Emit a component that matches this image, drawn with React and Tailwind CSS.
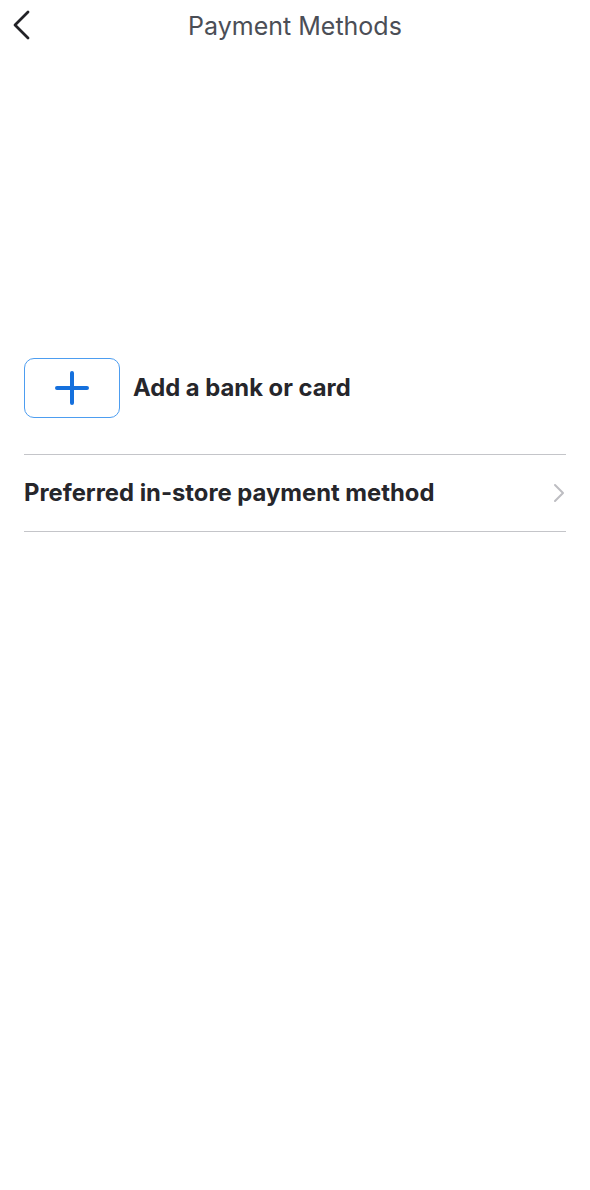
import React from 'react';

const ChevronLeft = () => (
  <svg width="20" height="30" viewBox="0 0 20 30" fill="none">
    <path d="M16 2 L3 15 L16 28" stroke="#222226" strokeWidth="2.8" strokeLinecap="round" strokeLinejoin="round" />
  </svg>
);

const ChevronRight = () => (
  <svg width="14" height="20" viewBox="0 0 14 20" fill="none">
    <path d="M3 2 L11 10 L3 18" stroke="#bdbdc2" strokeWidth="2" strokeLinecap="round" strokeLinejoin="round" />
  </svg>
);

const Plus = () => (
  <svg width="34" height="34" viewBox="0 0 34 34" fill="none">
    <path d="M17 2 V32 M2 17 H32" stroke="#1570dd" strokeWidth="4" strokeLinecap="round" />
  </svg>
);

const App = () => {
  return (
    <div className="w-full min-h-[1190px] bg-white" style={{ fontFamily: 'Inter, "Noto Sans", sans-serif' }}>
      <div className="relative flex h-[53px] items-center justify-center">
        <button className="absolute left-[12px] top-[10px]">
          <ChevronLeft />
        </button>
        <h1 className="text-[25px] font-normal text-[#4b4e56]">Payment Methods</h1>
      </div>

      <div className="mt-[305px] px-6">
        <div className="flex items-center gap-[13px]">
          <div className="flex h-[60px] w-[96px] items-center justify-center rounded-[10px] border border-[#4d9df0]">
            <Plus />
          </div>
          <span className="text-[23.8px] font-bold text-[#26262b]">Add a bank or card</span>
        </div>

        <div className="mt-[36px] border-t border-[#c4c5c9]" />
        <div className="flex h-[76px] items-center justify-between">
          <span className="text-[23.8px] font-bold text-[#26262b]">Preferred in-store payment method</span>
          <ChevronRight />
        </div>
        <div className="border-t border-[#c4c5c9]" />
      </div>
    </div>
  );
};

export default App;
